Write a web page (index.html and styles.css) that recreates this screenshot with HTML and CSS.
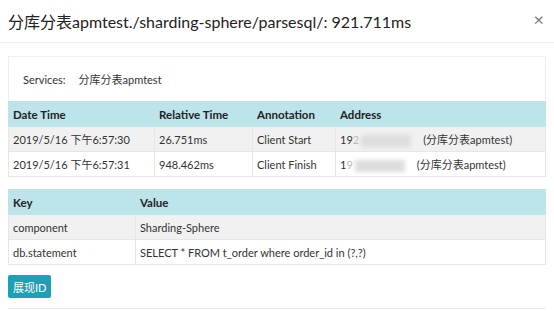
FILE: index.html
```html
<!DOCTYPE html>
<html lang="zh">
<head>
    <meta charset="UTF-8">
    <title>分库分表apmtest</title>
    <link rel="stylesheet" href="styles.css">
</head>
<body>
    <div class="modal">
        <div class="modal-header">
            <h4 class="modal-title">分库分表apmtest./sharding-sphere/parsesql/: 921.711ms</h4>
            <span class="close">&times;</span>
        </div>
        <div class="modal-body">
            <div class="services">
                <span class="label">Services:</span>
                <span>分库分表apmtest</span>
            </div>
            <table class="spans">
                <thead>
                    <tr>
                        <th class="c-date">Date Time</th>
                        <th class="c-rel">Relative Time</th>
                        <th class="c-ann">Annotation</th>
                        <th>Address</th>
                    </tr>
                </thead>
                <tbody>
                    <tr>
                        <td>2019/5/16 下午6:57:30</td>
                        <td>26.751ms</td>
                        <td>Client Start</td>
                        <td>19<span class="blur">2</span><span class="mask"></span>(分库分表apmtest)</td>
                    </tr>
                    <tr>
                        <td>2019/5/16 下午6:57:31</td>
                        <td>948.462ms</td>
                        <td>Client Finish</td>
                        <td>1<span class="blur">9</span><span class="mask"></span>(分库分表apmtest)</td>
                    </tr>
                </tbody>
            </table>

            <table class="tags">
                <thead>
                    <tr>
                        <th class="c-key">Key</th>
                        <th>Value</th>
                    </tr>
                </thead>
                <tbody>
                    <tr>
                        <td>component</td>
                        <td>Sharding-Sphere</td>
                    </tr>
                    <tr>
                        <td>db.statement</td>
                        <td>SELECT * FROM t_order where order_id in (?,?)</td>
                    </tr>
                </tbody>
            </table>

            <button class="btn-info">展现ID</button>
        </div>
        <div class="modal-footer"></div>
    </div>
</body>
</html>
```

FILE: styles.css
```css
body {
    margin: 0;
    background-color: #fff;
    font-family: 'Lato', 'Noto Sans CJK SC', sans-serif;
    color: #212529;
}

.modal {
    width: 554px;
}

.modal-header {
    display: flex;
    justify-content: space-between;
    align-items: center;
    height: 43px;
    padding: 0 8px;
    border-bottom: 1px solid #eceeef;
    box-sizing: border-box;
}

.modal-title {
    margin: 0;
    font-size: 16px;
    font-weight: normal;
    color: #222;
}

.close {
    font-size: 18px;
    color: #777;
    margin-right: 2px;
    margin-top: -4px;
}

.modal-body {
    padding: 13px 8px 0;
}

.services {
    height: 45px;
    display: flex;
    align-items: center;
    padding-left: 14px;
    border: 1px solid #eee;
    border-bottom: none;
    box-sizing: border-box;
    font-size: 11px;
    color: #333;
}

.services .label {
    margin-right: 13px;
}

table {
    width: 100%;
    border-collapse: collapse;
    font-size: 11px;
    color: #333;
}

th, td {
    height: 25px;
    padding: 0 4px;
    text-align: left;
    border: 1px solid #e6e6e6;
    box-sizing: border-box;
}

th {
    background-color: #bde4ea;
    border-color: #bde4ea;
    font-weight: bold;
    font-size: 11.5px;
    color: #222;
}

tbody tr:nth-child(odd) {
    background-color: #f1f1f1;
}

.c-date { width: 146px; }
.c-rel { width: 98px; }
.c-ann { width: 83px; }
.c-key { width: 127px; }

.blur {
    color: #bbb;
}

.mask {
    display: inline-block;
    width: 50px;
    height: 12px;
    margin: 0 12px 0 2px;
    vertical-align: middle;
    background-color: #ddd;
    filter: blur(2px);
}

.tags {
    margin-top: 12px;
}

.btn-info {
    display: block;
    margin-top: 10px;
    height: 23px;
    padding: 0 5px;
    border: none;
    border-radius: 2px;
    background-color: #1ba1b5;
    color: #fff;
    font-family: 'Lato', 'Noto Sans CJK SC', sans-serif;
    font-size: 11px;
}

.modal-footer {
    margin: 10px 8px 0;
    border-top: 1px solid #e9ecef;
}
```
